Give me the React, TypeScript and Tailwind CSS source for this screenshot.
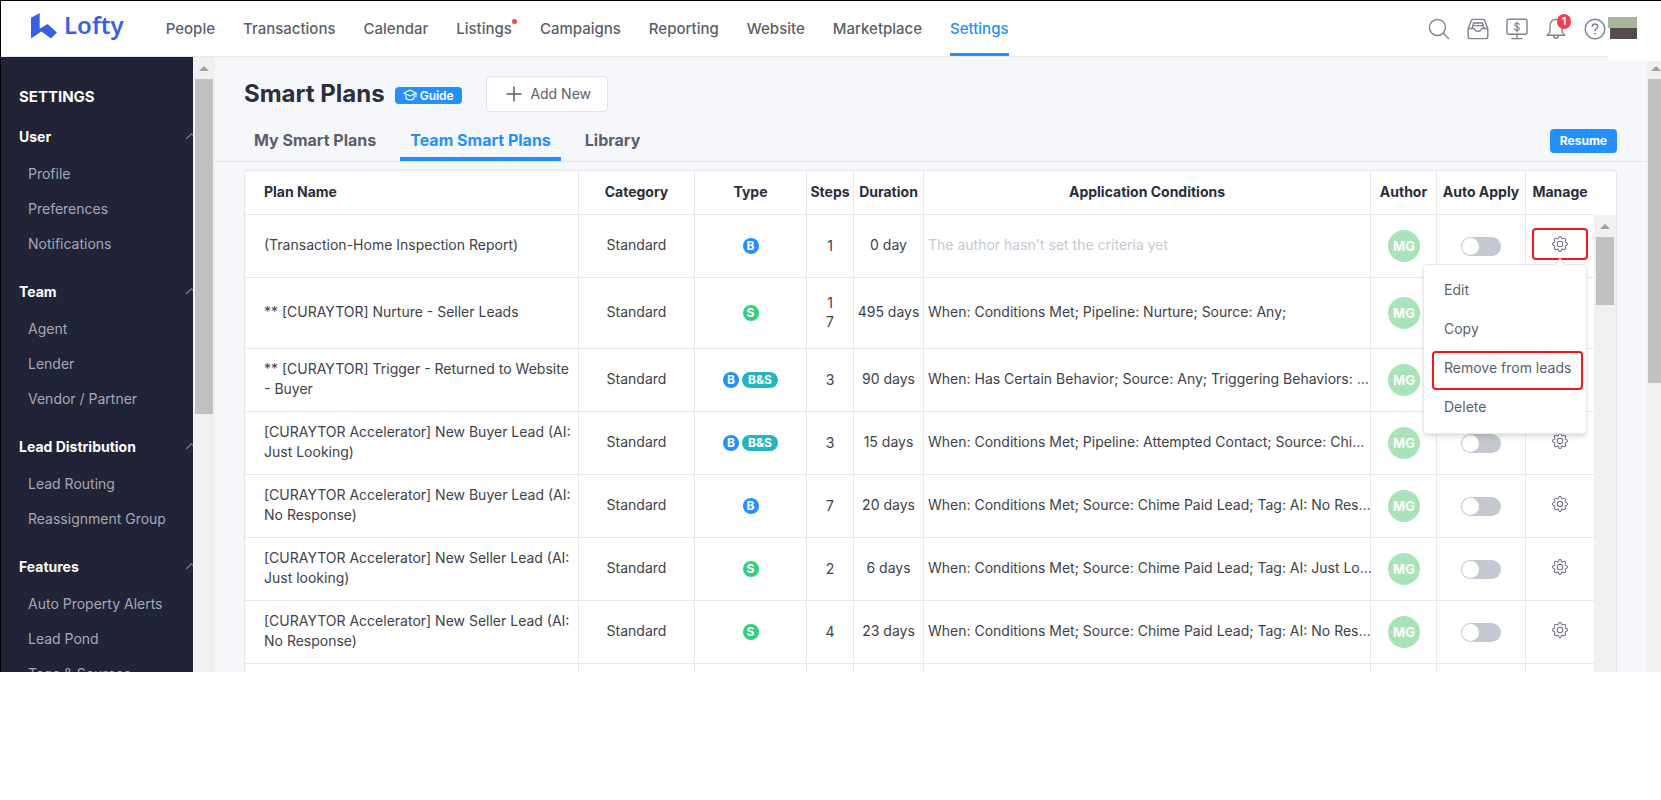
import React from 'react';
import { BsGear } from 'react-icons/bs';
import { Plus } from 'lucide-react';

const navItems = [
  'People',
  'Transactions',
  'Calendar',
  'Listings',
  'Campaigns',
  'Reporting',
  'Website',
  'Marketplace',
  'Settings',
];

const sideGroups = [
  { title: 'User', items: ['Profile', 'Preferences', 'Notifications'] },
  { title: 'Team', items: ['Agent', 'Lender', 'Vendor / Partner'] },
  { title: 'Lead Distribution', items: ['Lead Routing', 'Reassignment Group'] },
  { title: 'Features', items: ['Auto Property Alerts', 'Lead Pond', 'Tags & Sources'] },
];

type Plan = {
  name: string;
  types: string[];
  steps: string;
  duration: string;
  conditions?: string;
};

const plans: Plan[] = [
  { name: '(Transaction-Home Inspection Report)', types: ['B'], steps: '1', duration: '0 day' },
  {
    name: '** [CURAYTOR] Nurture - Seller Leads',
    types: ['S'],
    steps: '17',
    duration: '495 days',
    conditions: 'When: Conditions Met; Pipeline: Nurture; Source: Any;',
  },
  {
    name: '** [CURAYTOR] Trigger - Returned to Website - Buyer',
    types: ['B', 'B&S'],
    steps: '3',
    duration: '90 days',
    conditions: 'When: Has Certain Behavior; Source: Any; Triggering Behaviors: …',
  },
  {
    name: '[CURAYTOR Accelerator] New Buyer Lead (AI: Just Looking)',
    types: ['B', 'B&S'],
    steps: '3',
    duration: '15 days',
    conditions: 'When: Conditions Met; Pipeline: Attempted Contact; Source: Chi…',
  },
  {
    name: '[CURAYTOR Accelerator] New Buyer Lead (AI: No Response)',
    types: ['B'],
    steps: '7',
    duration: '20 days',
    conditions: 'When: Conditions Met; Source: Chime Paid Lead; Tag: AI: No Res…',
  },
  {
    name: '[CURAYTOR Accelerator] New Seller Lead (AI: Just looking)',
    types: ['S'],
    steps: '2',
    duration: '6 days',
    conditions: 'When: Conditions Met; Source: Chime Paid Lead; Tag: AI: Just Lo…',
  },
  {
    name: '[CURAYTOR Accelerator] New Seller Lead (AI: No Response)',
    types: ['S'],
    steps: '4',
    duration: '23 days',
    conditions: 'When: Conditions Met; Source: Chime Paid Lead; Tag: AI: No Res…',
  },
];

const badgeColors: Record<string, string> = {
  B: 'w-4 bg-[#2490fb]',
  S: 'w-4 bg-[#2fd07f]',
  'B&S': 'w-9 bg-[#27b5bd]',
};

const Logo = () => (
  <a href="#" className="flex items-start gap-[7px] pb-[6px] text-[#3b5fe0]" aria-label="Lofty">
    <svg width="26" height="26" viewBox="0 0 26 26" fill="currentColor">
      <path d="M0 4.8 8.7 0v15.8L16.6 11 26 19.4 20 25.6 10.4 18.4 0 25.6Z" />
    </svg>
    <span className="font-['Noto_Sans'] text-2xl font-semibold leading-6">Lofty</span>
  </a>
);

const SearchIcon = () => (
  <svg width="22" height="22" viewBox="0 0 22 22" fill="none" stroke="currentColor" strokeWidth="1.4">
    <circle cx="9.5" cy="9.5" r="8" />
    <path d="m15.2 15.2 5.3 5.3" strokeLinecap="round" />
  </svg>
);

const InboxIcon = () => (
  <svg width="22" height="22" viewBox="0 0 22 22" fill="none" stroke="currentColor" strokeWidth="1.4" strokeLinejoin="round">
    <path d="M1.2 10.5 4.5 2.2Q4.8 1.4 5.8 1.4h10.4q1 0 1.3.8l3.3 8.3v8.3q0 1.8-1.8 1.8H3q-1.8 0-1.8-1.8Z" />
    <path d="M1.2 10.5h5.3q.8 0 1.1.8.9 2.2 3.4 2.2t3.4-2.2q.3-.8 1.1-.8h5.3" />
    <path d="M5.2 10.2 6.6 5h8.8l1.4 5.2M6.2 7.6h9.6" />
  </svg>
);

const MonitorIcon = () => (
  <svg width="22" height="22" viewBox="0 0 22 22" fill="none" stroke="currentColor" strokeWidth="1.4" strokeLinecap="round">
    <rect x="1" y="1.2" width="20" height="15" rx="1.5" />
    <path d="M11 16.2v4.2M6 20.6h10" />
    <path d="M13.4 6.4q-.4-1.4-2.4-1.4t-2.3 1.7q0 1.4 2.3 1.9t2.4 2q-.2 1.8-2.4 1.8t-2.5-1.6M11 3.8v10" strokeWidth="1.2" />
  </svg>
);

const BellIcon = () => (
  <svg width="22" height="22" viewBox="0 0 22 22" fill="none" stroke="currentColor" strokeWidth="1.4" strokeLinecap="round" strokeLinejoin="round">
    <path d="M11 1.4Q5.2 1.8 5 8v4.4q0 2.6-2.8 4.8h17.6Q17 15 17 12.4V8Q16.8 1.8 11 1.4Z" />
    <path d="M8.6 17.6q.3 2.6 2.4 2.6t2.4-2.6" />
  </svg>
);

const HelpIcon = () => (
  <svg width="22" height="22" viewBox="0 0 22 22" fill="none" stroke="currentColor" strokeWidth="1.4" strokeLinecap="round">
    <circle cx="11" cy="11" r="9.8" />
    <path d="M8.2 8.6q.1-2.6 2.8-2.6t2.8 2.4q0 1.3-1.4 2.2-1.4.9-1.4 2.3" />
    <path d="M11 15.6v.2" strokeWidth="1.8" />
  </svg>
);

const GuideIcon = () => (
  <svg width="14" height="13" viewBox="0 0 14 13" fill="none" stroke="currentColor" strokeWidth="1.1" strokeLinejoin="round">
    <path d="M7 1 13 4 7 7 1 4Z" />
    <path d="M3 5.2v4.6q4 2.4 8 0V5.2M13 4v4.5M1 4v1" />
  </svg>
);

const ScrollArrow = () => (
  <svg width="10" height="5" viewBox="0 0 10 5" fill="#a0a0a0">
    <path d="M5 0 10 5H0Z" />
  </svg>
);

const Header = () => (
  <header className="flex h-14 shrink-0 items-center border-b border-[#e8e9ee] bg-white">
    <div className="flex h-full flex-1 items-center pl-[30px]">
      <Logo />
      <nav className="ml-[42px] flex h-full gap-7">
        {navItems.map((item) => (
          <a
            key={item}
            href="#"
            className={
              item === 'Settings'
                ? 'relative flex items-center border-b-3 border-[#2490fb] pt-[5px] text-[15px] font-medium text-[#2490fb]'
                : 'relative flex items-center pt-[2px] text-[15px] font-medium text-[#5b5f6b]'
            }
          >
            {item}
            {item === 'Listings' && (
              <span className="absolute top-[18px] -right-[5px] size-[5px] rounded-full bg-[#f0454f]" />
            )}
          </a>
        ))}
      </nav>
    </div>
    <div className="flex items-center gap-[17px] text-[#80838f]">
      <button aria-label="Search"><SearchIcon /></button>
      <button aria-label="Inbox"><InboxIcon /></button>
      <button aria-label="Billing"><MonitorIcon /></button>
      <button aria-label="Notifications" className="relative">
        <BellIcon />
        <span className="absolute -top-1 left-3 flex h-[15px] w-[14px] items-center justify-center rounded-full bg-[#f0404e] text-[11px] font-semibold text-white">
          1
        </span>
      </button>
      <button aria-label="Help"><HelpIcon /></button>
    </div>
    <div className="z-10 ml-[2px] h-[60px] w-[53px] self-start bg-white pt-4">
      <div className="h-[11px] w-[29px] bg-[#a3b699]" />
      <div className="ml-[2px] h-[11px] w-[27px] bg-[#574a4a]" />
    </div>
  </header>
);

const Sidebar = () => (
  <aside className="w-48 shrink-0 overflow-hidden bg-[#202436] pt-[30px]">
    <h2 className="pl-[18px] text-[15px] font-bold leading-5 text-white">SETTINGS</h2>
    <div className="mt-[10px] flex flex-col gap-[11px]">
      {sideGroups.map((group) => (
        <section key={group.title}>
          <button className="flex h-[39px] w-full items-center justify-between pl-[18px] text-sm font-bold text-white">
            {group.title}
            <svg width="7" height="7" viewBox="0 0 7 7" fill="none" stroke="#80838f" strokeWidth="1.2">
              <path d="M0 6 5.5.8 7 2.2" />
            </svg>
          </button>
          {group.items.map((item) => (
            <a key={item} href="#" className="flex h-[35px] items-center pl-[27px] text-sm text-[#a5a8b3]">
              {item}
            </a>
          ))}
        </section>
      ))}
    </div>
  </aside>
);

const ManageMenu = () => (
  <div className="absolute top-[49px] right-[7px] z-10 w-[164px] rounded-sm border border-[#e8e9ee] bg-white pt-[5px] pb-[7px] text-left shadow-md">
    <span className="absolute -top-[5px] right-[22px] size-2 rotate-45 border-t border-l border-[#dcdde3] bg-white" />
    {['Edit', 'Copy', 'Remove from leads', 'Delete'].map((item) => (
      <button key={item} className="relative flex h-[39px] w-full items-center pl-5 text-sm text-[#5b5f6b]">
        {item}
        {item === 'Remove from leads' && (
          <span className="absolute top-[3px] right-[3px] left-2 h-[39px] rounded-sm border-2 border-[#f01818]" />
        )}
      </button>
    ))}
  </div>
);

const PlanTable = () => (
  <table className="w-full table-fixed border-separate border-spacing-0 text-center text-sm text-[#404248]">
    <colgroup>
      <col className="w-[334px]" />
      <col className="w-[116px]" />
      <col className="w-[112px]" />
      <col className="w-[47px]" />
      <col className="w-[70px]" />
      <col />
      <col className="w-[66px]" />
      <col className="w-[89px]" />
      <col className="w-[68px]" />
    </colgroup>
    <thead>
      <tr className="h-11 text-[#2b2e3c] *:border-r *:border-b *:border-[#e8e9ee] *:pb-[2px] *:font-bold *:last:border-r-0">
        <th className="pl-[19px] text-left">Plan Name</th>
        <th>Category</th>
        <th>Type</th>
        <th>Steps</th>
        <th>Duration</th>
        <th>Application Conditions</th>
        <th>Author</th>
        <th className="whitespace-nowrap">Auto Apply</th>
        <th>Manage</th>
      </tr>
    </thead>
    <tbody>
      {plans.map((plan, index) => (
        <tr
          key={index}
          className={
            plan.steps.length > 1
              ? 'h-[71px] *:border-r *:border-b *:border-[#e8e9ee] *:last:border-r-0'
              : 'h-[63px] *:border-r *:border-b *:border-[#e8e9ee] *:last:border-r-0'
          }
        >
          <td className="pr-1 pb-[2px] pl-[19px] text-left leading-5">{plan.name}</td>
          <td className="pb-[2px]">Standard</td>
          <td>
            <div className="flex items-center justify-center gap-[3px]">
              {plan.types.map((type) => (
                <span
                  key={type}
                  className={`flex h-4 items-center justify-center rounded-full text-xs font-bold text-white ${badgeColors[type]}`}
                >
                  {type}
                </span>
              ))}
            </div>
          </td>
          <td className="px-[18px] pb-[2px] leading-[19px] break-all">{plan.steps}</td>
          <td className="pb-[2px] whitespace-nowrap">{plan.duration}</td>
          <td className="pb-[2px] pl-1 text-left whitespace-nowrap">
            {plan.conditions || <span className="text-[#c6c8d1]">The author hasn't set the criteria yet</span>}
          </td>
          <td className="pl-px">
            <span className="mx-auto flex size-8 items-center justify-center rounded-full bg-[#a8e3bb] text-[13px] font-bold text-white">
              MG
            </span>
          </td>
          <td>
            <input
              type="checkbox"
              role="switch"
              aria-label={`Auto apply ${plan.name}`}
              className="mx-auto block h-[19px] w-10 appearance-none rounded-full bg-[#c6c8d1] p-px before:block before:size-[17px] before:rounded-full before:bg-white"
            />
          </td>
          <td className="relative pb-1">
            <button
              aria-label="Manage plan"
              className={
                index === 0
                  ? 'mx-auto flex h-8 w-14 items-center justify-center rounded-sm border-2 border-[#f01818]'
                  : 'mx-auto flex h-8 w-14 items-center justify-center'
              }
            >
              <BsGear size={16} color="#70737f" />
            </button>
            {index === 0 && <ManageMenu />}
          </td>
        </tr>
      ))}
      {/* start of the next row, cut by the viewport */}
      <tr className="h-[63px] *:border-r *:border-[#e8e9ee] *:last:border-r-0">
        <td /><td /><td /><td /><td /><td /><td /><td /><td />
      </tr>
    </tbody>
  </table>
);

const App = () => {
  return (
    <div className="bg-white font-['Inter',sans-serif]">
      <div className="flex h-[84vh] flex-col overflow-hidden border-t border-l border-black">
        <Header />
        <div className="flex min-h-0 flex-1">
          <Sidebar />
          <div className="flex w-[22px] shrink-0 flex-col items-center bg-[#f0f0f0] pt-[9px]">
            <ScrollArrow />
            <div className="mt-2 h-[335px] w-[18px] bg-[#c1c1c1]" />
          </div>

          <main className="flex min-w-0 flex-1 flex-col bg-[#f6f7fb]">
            <div className="flex items-center pt-[19px] pl-[29px]">
              <h1 className="text-2xl font-bold text-[#2b2e3c]">Smart Plans</h1>
              <button className="mt-[3px] ml-[10px] flex h-[17px] items-center gap-[3px] rounded-sm bg-[#2490fb] px-2 text-xs font-semibold text-white">
                <GuideIcon />
                Guide
              </button>
              <button className="ml-6 flex h-9 w-[122px] items-center justify-center gap-1 rounded-sm border border-[#e0e2e9] bg-white text-sm text-[#5b5f6b]">
                <Plus size={24} strokeWidth={1.5} />
                Add New
              </button>
            </div>

            <div className="flex h-[50px] items-end border-b border-[#e4e6ec] pr-[30px] pl-[29px] text-base font-bold text-[#5b5f6b]">
              <div className="flex flex-1 gap-[14px]">
                <button className="h-10 border-b-4 border-transparent px-[10px] pt-[2px]">My Smart Plans</button>
                <button className="h-10 border-b-4 border-[#2490fb] px-[10px] pt-[2px] text-[#2490fb]">Team Smart Plans</button>
                <button className="h-10 border-b-4 border-transparent px-[10px] pt-[2px]">Library</button>
              </div>
              <button className="mb-2 h-6 rounded-sm bg-[#2490fb] px-[10px] text-xs text-white">Resume</button>
            </div>

            <div className="mt-2 mr-[30px] ml-[29px] flex min-h-0 flex-1 rounded-t-sm border border-b-0 border-[#e4e6ec] bg-white">
              <div className="min-w-0 flex-1">
                <PlanTable />
              </div>
              <div className="flex w-[22px] shrink-0 flex-col pt-11">
                <div className="flex flex-1 flex-col items-center bg-[#f0f0f0] pt-[9px]">
                  <ScrollArrow />
                  <div className="mt-2 h-[68px] w-[18px] bg-[#c1c1c1]" />
                </div>
              </div>
            </div>
          </main>

          <div className="flex w-[14px] shrink-0 flex-col items-end overflow-hidden bg-[#f0f0f0] pt-[9px]">
            <ScrollArrow />
            <div className="mt-2 h-[304px] w-[13px] bg-[#c1c1c1]" />
          </div>
        </div>
      </div>
    </div>
  );
};

export default App;
